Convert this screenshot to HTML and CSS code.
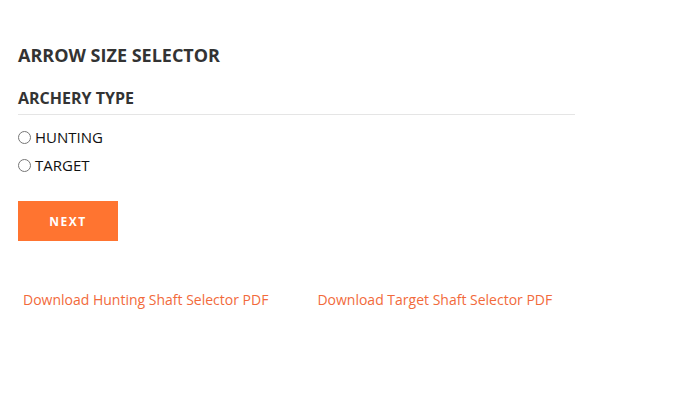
FILE: index.html
```html
<!DOCTYPE html>
<html>
<head>
<meta charset="utf-8">
<link rel="stylesheet" href="styles.css">
</head>
<body>
<div class="page">
  <h1 class="title">ARROW SIZE SELECTOR</h1>
  <h2 class="section">ARCHERY TYPE</h2>
  <div class="options">
    <label class="option"><input type="radio" name="type" class="radio"><span>HUNTING</span></label>
    <label class="option"><input type="radio" name="type" class="radio"><span>TARGET</span></label>
  </div>
  <button class="next">NEXT</button>
  <div class="links">
    <a class="link" href="#">Download Hunting Shaft Selector PDF</a>
    <a class="link" href="#">Download Target Shaft Selector PDF</a>
  </div>
</div>
</body>
</html>
```
FILE: styles.css
```css
* { box-sizing: border-box; }
html, body { margin: 0; padding: 0; background: #fff; }
body { font-family: "Open Sans", "Liberation Sans", sans-serif; color: #222; }
.page { padding: 43px 18px 0 18px; width: 593px; }
.title { margin: 0; font-size: 18px; font-weight: 700; color: #333; line-height: 24px; }
.section { margin: 20px 0 0 0; font-size: 16px; font-weight: 700; color: #333; line-height: 22px; padding-bottom: 5px; border-bottom: 1px solid #e5e5e5; }
.options { margin-top: 12px; display: flex; flex-direction: column; gap: 8px; }
.option { display: flex; align-items: center; gap: 4px; font-size: 15px; line-height: 20px; color: #111; }
.radio { margin: 0; width: 13px; height: 13px; }
.next { margin-top: 26px; width: 100px; height: 40px; border: 0; background: #ff7430; color: #fff; font-family: "Open Sans", sans-serif; font-weight: 700; font-size: 12px; letter-spacing: 1.5px; padding: 0; }
.links { margin-top: 49px; padding-left: 5px; display: flex; gap: 49px; }
.link { color: #f26a3b; text-decoration: none; font-size: 14px; line-height: 20px; }
```
